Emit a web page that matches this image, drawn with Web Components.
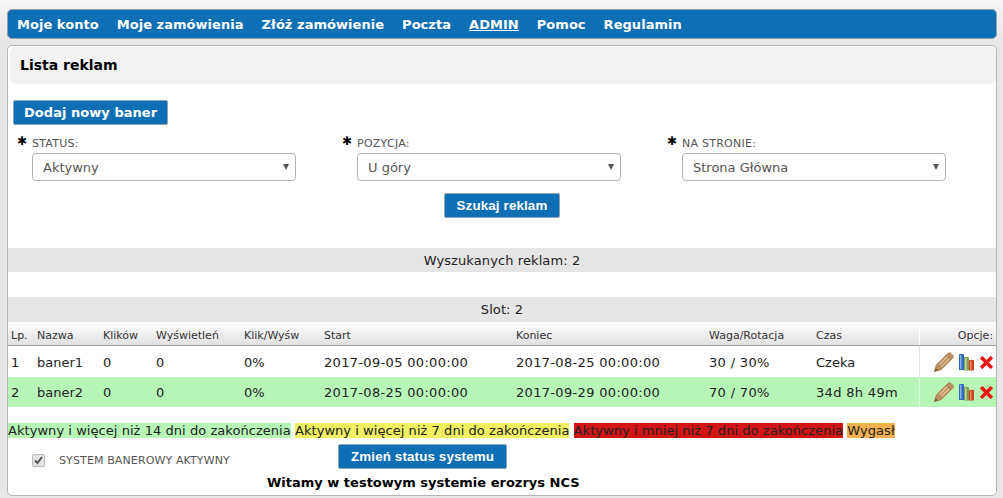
<!DOCTYPE html>
<html lang="pl">
<head>
<meta charset="utf-8">
<title>Lista reklam</title>
<style>
  html, body { height: 100%; }
  body {
    margin: 0;
    padding: 9px 6px 0 7px;
    box-sizing: border-box;
    overflow: hidden;
    background: linear-gradient(#f6f5f5, #e8e6e6 40px);
    font-family: "DejaVu Sans", Verdana, sans-serif;
    font-size: 13px;
    color: #222;
  }
</style>
</head>
<body>
<main-nav>
  <a href="#">Moje konto</a>
  <a href="#">Moje zamówienia</a>
  <a href="#">Złóż zamówienie</a>
  <a href="#">Poczta</a>
  <a href="#" style="text-decoration: underline">ADMIN</a>
  <a href="#">Pomoc</a>
  <a href="#">Regulamin</a>
</main-nav>
<content-panel heading="Lista reklam">
  <blue-button big>Dodaj nowy baner</blue-button>
  <filter-row>
    <filter-field label="STATUS:" value="Aktywny"></filter-field>
    <filter-field label="POZYCJA:" value="U góry"></filter-field>
    <filter-field label="NA STRONIE:" value="Strona Główna"></filter-field>
  </filter-row>
  <search-action><blue-button>Szukaj reklam</blue-button></search-action>
  <info-bar style="margin-top: 30px; height: 24px">Wyszukanych reklam: 2</info-bar>
  <info-bar style="margin-top: 25px">Slot: 2</info-bar>
  <banner-table></banner-table>
  <status-legend></status-legend>
  <system-status></system-status>
  <welcome-line>Witamy w testowym systemie erozrys NCS</welcome-line>
</content-panel>

<script>
const baseFont = `"DejaVu Sans", Verdana, sans-serif`;

function shadow(el, html) {
  el.attachShadow({ mode: "open" }).innerHTML = html;
}

class MainNav extends HTMLElement {
  constructor() {
    super();
    shadow(this, `
      <style>
        :host {
          display: flex;
          gap: 18px;
          height: 30px;
          align-items: center;
          padding: 0 9px;
          box-sizing: border-box;
          background: #0f6fb5;
          border: 1px solid #8fa3b3;
          border-radius: 5px;
        }
        ::slotted(a) {
          color: #fff;
          font: bold 13px ${baseFont};
          letter-spacing: .04px;
          text-decoration: none;
        }
      </style>
      <slot></slot>`);
  }
}

class ContentPanel extends HTMLElement {
  constructor() {
    super();
    shadow(this, `
      <style>
        :host {
          display: block;
          margin-top: 6px;
          height: 451px;
          box-sizing: border-box;
          background: #fff;
          border: 1px solid #b5b5b5;
          border-radius: 5px;
          padding: 1px 0 0;
          overflow: hidden;
        }
        h2 {
          margin: 0 0 0 2px;
          height: 37px;
          padding-left: 10px;
          background: #f2f2f2;
          border-radius: 5px;
          font: bold 14px/37px ${baseFont};
          color: #000;
        }
        .body { padding-top: 16px; }
      </style>
      <h2></h2>
      <div class="body"><slot></slot></div>`);
    this.shadowRoot.querySelector("h2").textContent = this.getAttribute("heading");
  }
}

class BlueButton extends HTMLElement {
  constructor() {
    super();
    shadow(this, `
      <style>
        :host {
          display: inline-block;
          box-sizing: border-box;
          height: 25px;
          padding: 0 12px;
          background: #0f6fb5;
          border: 1px solid #8fa3b3;
          border-radius: 2px;
          color: #fff;
          font: bold 13.33px/23px "Liberation Sans", Arial, sans-serif;
          letter-spacing: .15px;
          white-space: nowrap;
        }
        :host([big]) { margin-left: 5px; padding: 0 10px; font: bold 13px/23px ${baseFont}; letter-spacing: .04px; }
      </style>
      <slot></slot>`);
  }
}

class FilterRow extends HTMLElement {
  constructor() {
    super();
    shadow(this, `
      <style>
        :host {
          display: grid;
          grid-template-columns: repeat(3, 325px);
          padding: 9px 0 0 9px;
        }
      </style>
      <slot></slot>`);
  }
}

class FilterField extends HTMLElement {
  constructor() {
    super();
    shadow(this, `
      <style>
        :host { display: flex; gap: 6px; }
        .req { width: 9px; font: bold 12px/14px ${baseFont}; color: #000; }
        label { display: block; font: 11px/13px ${baseFont}; letter-spacing: .25px; color: #555; margin: 3px 0 3px; }
        .box {
          display: flex;
          justify-content: space-between;
          align-items: center;
          box-sizing: border-box;
          width: 264px;
          height: 28px;
          padding: 0 6px 0 10px;
          border: 1px solid #b3b3b3;
          border-radius: 4px;
          color: #555;
          font: 13px ${baseFont};
        }
        .box i { width: 0; height: 0; border: 3.5px solid transparent; border-top: 6px solid #555; border-bottom: 0; }
      </style>
      <span class="req">✱</span>
      <div>
        <label></label>
        <div class="box"><span></span><i></i></div>
      </div>`);
    this.shadowRoot.querySelector("label").textContent = this.getAttribute("label");
    this.shadowRoot.querySelector(".box span").textContent = this.getAttribute("value");
  }
}

class SearchAction extends HTMLElement {
  constructor() {
    super();
    shadow(this, `
      <style>:host { display: flex; justify-content: center; margin-top: 12px; }</style>
      <slot></slot>`);
  }
}

class InfoBar extends HTMLElement {
  constructor() {
    super();
    shadow(this, `
      <style>
        :host {
          display: block;
          height: 25px;
          background: #e6e5e5;
          text-align: center;
          font: 13px/25px ${baseFont};
          letter-spacing: .1px;
          color: #222;
        }
      </style>
      <slot></slot>`);
  }
}

const pencil = `<svg width="20" height="20" viewBox="0 0 20 20"><path d="M.5 19.500l1.800-6.600L13.800 1.400c.9-.9 2.300-.9 3.200 0l1.600 1.600c.9.900.9 2.300 0 3.200L7.100 17.700z" fill="#bb8f5e" stroke="#a87c4a" stroke-width=".8"/><path d="M12.300 3.300l4.400 4.400" stroke="#8a6338" stroke-width="1" fill="none"/><path d="M5.500 12.500l8-8M7.500 14.500l8-8" stroke="#e0c6a2" stroke-width="1.200"/><path d="M.5 19.500l.9-3.500 2.600 2.600z" fill="#7d5a32"/></svg>`;
const books = `<svg width="16" height="17" viewBox="0 0 16 17"><path d="M0 1a1 1 0 0 1 1-1h3a1 1 0 0 1 1 1v15H0z" fill="#2f68b8"/><rect x="1" y="1" width="1.500" height="14" fill="#86b0e6"/><path d="M5 4a1 1 0 0 1 1-1h3a1 1 0 0 1 1 1v12.500H5z" fill="#7f9c55"/><rect x="6" y="4" width="1.500" height="12" fill="#c3d4a2"/><path d="M10 7a1 1 0 0 1 1-1h3a1 1 0 0 1 1 1v9.500h-5z" fill="#cf3f1c"/><rect x="11" y="7" width="1.500" height="9" fill="#ef8a66"/></svg>`;
const cross = `<svg width="13" height="13" viewBox="0 0 13 13"><path d="M2.300 2.300l8.400 8.400M10.700 2.300l-8.400 8.400" stroke="#ee1111" stroke-width="3.400" stroke-linecap="square"/></svg>`;

class BannerTable extends HTMLElement {
  constructor() {
    super();
    const rows = [
      ["1", "baner1", "0", "0", "0%", "2017-09-05 00:00:00", "2017-08-25 00:00:00", "30 / 30%", "Czeka"],
      ["2", "baner2", "0", "0", "0%", "2017-08-25 00:00:00", "2017-09-29 00:00:00", "70 / 70%", "34d 8h 49m"],
    ];
    const head = ["Lp.", "Nazwa", "Klików", "Wyświetleń", "Klik/Wyśw", "Start", "Koniec", "Waga/Rotacja", "Czas"];
    const wide = (c) => /\d.*\d.*\d/.test(c) ? ` class="wide"` : "";
    shadow(this, `
      <style>
        :host { display: block; }
        table { width: 100%; border-collapse: collapse; table-layout: fixed; font: 13px ${baseFont}; color: #222; }
        th {
          height: 20px;
          padding: 3px 0 0 3px;
          text-align: left;
          font: 11px ${baseFont};
          color: #333;
          background: linear-gradient(#fff, #e2e1e1);
          border-bottom: 1px solid #9d9d9d;
        }
        td { height: 30px; padding: 0 0 0 3px; }
        tr:first-child td { padding-top: 1px; }
        td.wide { letter-spacing: .32px; }
        tr.green td { background: #b6f7b6; }
        th:last-child { border-left: 1px solid #fff; text-align: right; padding-right: 3px; }
        td:last-child { border-left: 1px solid #e6e5e5; padding-right: 3px; }
        tr.green td:last-child { border-left-color: #e9fbe9; }
        .opts { display: flex; align-items: center; justify-content: flex-end; gap: 5px; }
      </style>
      <table>
        <colgroup>
          <col style="width:26px"><col style="width:66px"><col style="width:53px"><col style="width:88px"><col style="width:80px">
          <col style="width:192px"><col style="width:193px"><col style="width:107px"><col style="width:106px"><col>
        </colgroup>
        <thead><tr>${head.map((h) => `<th>${h}</th>`).join("")}<th>Opcje:</th></tr></thead>
        <tbody>
          ${rows.map((r, i) => `<tr class="${i ? "green" : ""}">${r.map((c) => `<td${wide(c)}>${c}</td>`).join("")}<td><div class="opts">${pencil}${books}${cross}</div></td></tr>`).join("")}
        </tbody>
      </table>`);
  }
}

class StatusLegend extends HTMLElement {
  constructor() {
    super();
    shadow(this, `
      <style>
        :host { display: block; margin-top: 16px; font: 13px/16px ${baseFont}; letter-spacing: .05px; color: #222; white-space: nowrap; }
      </style>
      <span style="background:#b6f7b6">Aktywny i więcej niż 14 dni do zakończenia</span>
      <span style="background:#f0f060">Aktywny i więcej niż 7 dni do zakończenia</span>
      <span style="background:#d21414">Aktywny i mniej niż 7 dni do zakończenia</span>
      <span style="background:#f5b050">Wygasł</span>`);
  }
}

class SystemStatus extends HTMLElement {
  constructor() {
    super();
    shadow(this, `
      <style>
        :host { display: flex; align-items: flex-start; margin-top: 5px; padding-left: 24px; height: 25px; }
        .check {
          flex: none;
          width: 11px; height: 11px; margin-top: 10px; border: 1px solid #bbb; border-radius: 2px; background: #e4e4e4;
          display: flex;
        }
        .label { margin: 10px 0 0 14px; font: 11px/14px ${baseFont}; letter-spacing: .12px; color: #555; width: 279px; flex: none; }
      </style>
      <span class="check"><svg width="11" height="11" viewBox="0 0 11 11"><path d="M2 5.500l2.500 2.500L9 2" stroke="#555" stroke-width="2" fill="none"/></svg></span>
      <span class="label">SYSTEM BANEROWY AKTYWNY</span>
      <blue-button>Zmień status systemu</blue-button>`);
  }
}

class WelcomeLine extends HTMLElement {
  constructor() {
    super();
    shadow(this, `
      <style>
        :host { display: block; margin-top: 5px; padding-left: 259px; font: bold 13px/17px ${baseFont}; color: #000; }
      </style>
      <slot></slot>`);
  }
}

customElements.define("main-nav", MainNav);
customElements.define("content-panel", ContentPanel);
customElements.define("blue-button", BlueButton);
customElements.define("filter-row", FilterRow);
customElements.define("filter-field", FilterField);
customElements.define("search-action", SearchAction);
customElements.define("info-bar", InfoBar);
customElements.define("banner-table", BannerTable);
customElements.define("status-legend", StatusLegend);
customElements.define("system-status", SystemStatus);
customElements.define("welcome-line", WelcomeLine);
</script>
</body>
</html>
